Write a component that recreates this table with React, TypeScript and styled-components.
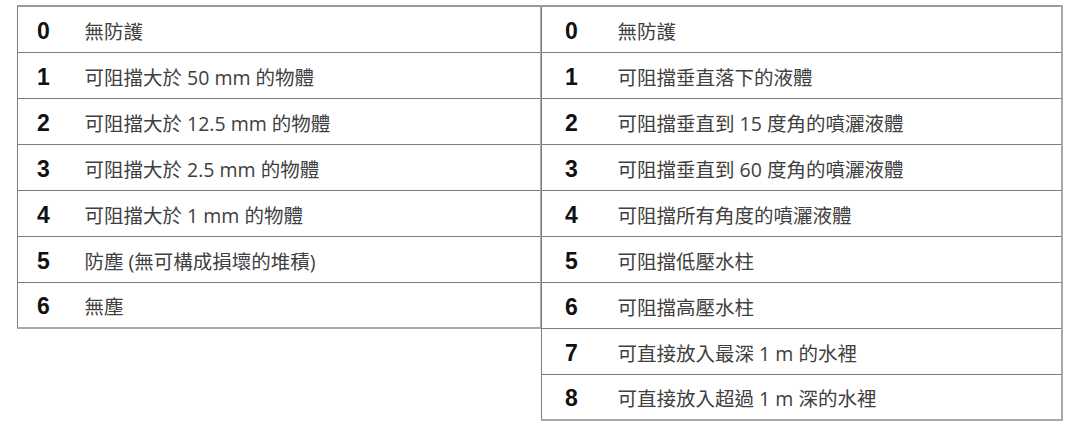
import React from 'react';
import styled, { createGlobalStyle } from 'styled-components';

const GlobalStyle = createGlobalStyle`
  html, body {
    margin: 0;
    padding: 0;
    background: #ffffff;
  }
`;

const Page = styled.div`
  display: flex;
  align-items: flex-start;
  padding: 5px 0 0 17px;
`;

const Table = styled.table<{ $width: number; $overlap?: boolean }>`
  width: ${(p) => p.$width}px;
  border-collapse: collapse;
  margin-left: ${(p) => (p.$overlap ? '-1px' : '0')};
  border-top: 2px solid #9a9a9a;
  border-right: 2px solid #a8a8a8;
  border-bottom: 2px solid #a8a8a8;
  border-left: 1px solid #7c7c7c;
`;

const Row = styled.tr`
  height: 46px;
  border-top: 1px solid #7c7c7c;

  &:first-child {
    border-top: none;
  }
`;

const Code = styled.td<{ $indent: number; $col: number }>`
  width: ${(p) => p.$col}px;
  padding: 4px 0 0 ${(p) => p.$indent}px;
  box-sizing: border-box;
  font-family: 'Liberation Sans', Arial, sans-serif;
  font-weight: bold;
  font-size: 23px;
  color: #111111;
  vertical-align: middle;
`;

const Desc = styled.td`
  padding: 2px 0 0 0;
  font-family: 'Open Sans', 'Noto Sans CJK TC', sans-serif;
  font-size: 19.5px;
  color: #404040;
  vertical-align: middle;
  white-space: nowrap;
`;

const solids = [
  '無防護',
  '可阻擋大於 50 mm 的物體',
  '可阻擋大於 12.5 mm 的物體',
  '可阻擋大於 2.5 mm 的物體',
  '可阻擋大於 1 mm 的物體',
  '防塵 (無可構成損壞的堆積)',
  '無塵',
];

const liquids = [
  '無防護',
  '可阻擋垂直落下的液體',
  '可阻擋垂直到 15 度角的噴灑液體',
  '可阻擋垂直到 60 度角的噴灑液體',
  '可阻擋所有角度的噴灑液體',
  '可阻擋低壓水柱',
  '可阻擋高壓水柱',
  '可直接放入最深 1 m 的水裡',
  '可直接放入超過 1 m 深的水裡',
];

const App: React.FC = () => {
  return (
    <>
      <GlobalStyle />
      <Page>
        <Table $width={525}>
          <tbody>
            {solids.map((text, i) => (
              <Row key={i}>
                <Code $indent={19} $col={67}>{i}</Code>
                <Desc>{text}</Desc>
              </Row>
            ))}
          </tbody>
        </Table>
        <Table $width={522} $overlap>
          <tbody>
            {liquids.map((text, i) => (
              <Row key={i}>
                <Code $indent={23} $col={76}>{i}</Code>
                <Desc>{text}</Desc>
              </Row>
            ))}
          </tbody>
        </Table>
      </Page>
    </>
  );
};

export default App;
